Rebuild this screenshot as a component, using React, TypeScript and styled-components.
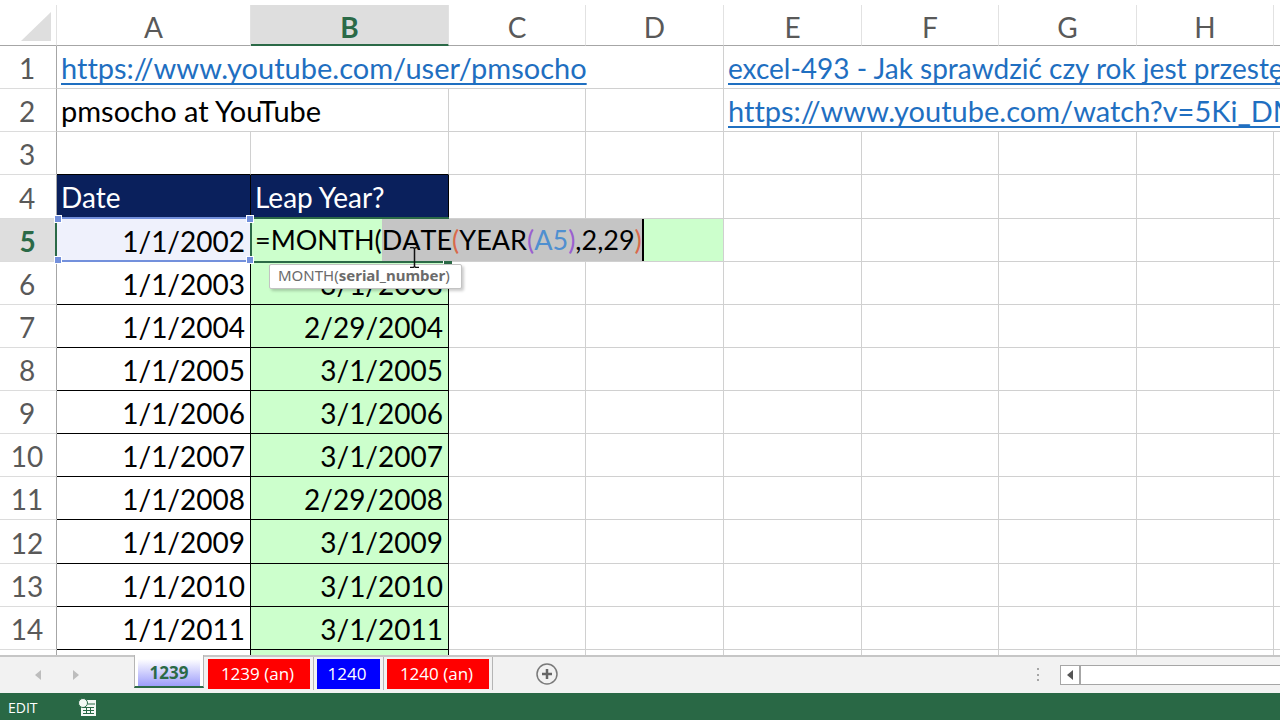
import React from 'react';
import styled, { createGlobalStyle, css } from 'styled-components';

const line = '#d0d0d0';
const strongLine = '#a6a6a6';
const green = '#2b6a47';
const blue = '#7390dc';
const lime = '#ccffcc';

const GlobalStyle = createGlobalStyle`
  * { box-sizing: border-box; }
  body { margin: 0; background: #fff; }
`;

const Workbook = styled.div`
  display: flex;
  flex-direction: column;
  height: 100vh;
  overflow: hidden;
  font-family: Lato, 'Liberation Sans', sans-serif;
`;

const GridArea = styled.main`
  flex: 1;
  min-height: 0;
  padding-top: 5px;
  overflow: hidden;
`;

const Sheet = styled.table`
  width: 100%;
  min-width: 1412px;
  table-layout: fixed;
  border-collapse: separate;
  border-spacing: 0;
  font-size: 28px;
  line-height: 34px;
  font-variant-ligatures: none;
  color: #000;
`;

const Col = styled.col<{ $w?: number }>`
  width: ${(p) => (p.$w ? `${p.$w}px` : 'auto')};
`;

const Row = styled.tr<{ $tall?: boolean }>`
  height: ${(p) => (p.$tall ? 44 : 43)}px;
`;

const Corner = styled.td`
  height: 41px;
  padding: 0 5px 4px 0;
  border-right: 1px solid #e2e2e2;
  border-bottom: 1px solid ${strongLine};
  text-align: right;
  vertical-align: bottom;
  svg { display: block; margin-left: auto; }
`;

const ColumnHead = styled.th<{ $active?: boolean }>`
  height: 41px;
  padding: 4px 0 0;
  border-right: 1px solid #e2e2e2;
  border-bottom: 1px solid ${strongLine};
  color: #595959;
  font-weight: 400;
  ${(p) => p.$active && css`
    padding-top: 5px;
    background: #dedede;
    border-bottom: 2px solid ${green};
    color: ${green};
    font-weight: 700;
  `}
`;

const RowHead = styled.th<{ $active?: boolean }>`
  padding: 2px 2px 0 0;
  border-right: 1px solid ${strongLine};
  border-bottom: 1px solid #dcdcdc;
  color: #595959;
  font-weight: 400;
  ${(p) => p.$active && css`
    padding-right: 0;
    background: #dedede;
    border-right: 2px solid ${green};
    color: ${green};
    font-weight: 700;
  `}
`;

const Cell = styled.td<{ $kind?: 'title' | 'date' | 'result'; $top?: boolean; $large?: boolean }>`
  position: relative;
  padding: 1px 5px 0 4px;
  border-right: 1px solid ${line};
  border-bottom: 1px solid ${line};
  font-size: ${(p) => (p.$large ? 29 : 28)}px;
  white-space: nowrap;
  overflow: hidden;
  ${(p) => p.$top && css`border-bottom-color: #000;`}
  ${(p) => p.$kind && css`
    border-color: #000;
    text-align: right;
  `}
  ${(p) => p.$kind === 'title' && css`
    background: #0a205c;
    color: #fff;
    text-align: left;
  `}
  ${(p) => p.$kind === 'result' && css`background: ${lime};`}
`;

const ReferencedCell = styled(Cell)`
  overflow: visible;
  background: #eff1fc;
  border-color: ${blue};
`;

const EditedCell = styled(Cell)`
  overflow: visible;
  padding: 0 4px;
  background: ${lime};
`;

const ReferenceFrame = styled.div`
  position: absolute;
  z-index: 2;
  inset: -2px -1px -1px 0;
  border: solid ${blue};
  border-width: 2px 0;
`;

const Handle = styled.span<{ $x: 'left' | 'right'; $y: 'top' | 'bottom' }>`
  position: absolute;
  ${(p) => p.$x}: -3px;
  ${(p) => p.$y}: -4px;
  width: 8px;
  height: 8px;
  border: 1px solid #fff;
  background: ${blue};
`;

const ActiveFrame = styled.div`
  position: absolute;
  z-index: 1;
  top: -2px;
  bottom: -2px;
  left: -1px;
  width: 199px;
  border: 2px solid ${green};
  border-right: 0;
  &::after {
    content: '';
    position: absolute;
    right: -3px;
    bottom: -3px;
    width: 8px;
    height: 5px;
    border: solid #fff;
    border-width: 1px 0 0 1px;
    background: ${green};
  }
`;

const Formula = styled.div`
  position: relative;
  z-index: 2;
  display: flex;
  align-items: center;
  height: 42px;
  outline: none;
  font-size: 27px;
  font-kerning: none;
`;

const Selection = styled.span`
  height: 42px;
  line-height: 42px;
  background: #c5c5c5;
  border-right: 2px solid #000;
`;

const Paren = styled.span<{ $tone: string }>`
  color: ${(p) => p.$tone};
`;

const Hint = styled.div`
  position: absolute;
  z-index: 3;
  top: 45px;
  left: 18px;
  height: 25px;
  padding: 0 11px 0 8px;
  border: 1px solid #c3c3c3;
  border-radius: 2px;
  background: #fff;
  box-shadow: 2px 2px 3px rgba(0, 0, 0, 0.2);
  color: #6b6b6b;
  font: 15px/20px 'Noto Sans', sans-serif;
`;

const Pointer = styled.svg`
  position: absolute;
  z-index: 4;
  top: 28px;
  left: 158px;
`;

const SheetLink = styled.a`
  color: #1f6fc1;
  text-decoration: underline;
  text-decoration-thickness: 2px;
  text-underline-offset: 4px;
  text-decoration-skip-ink: none;
`;

const TabBar = styled.nav`
  display: flex;
  flex: none;
  height: 38px;
  border-top: 2px solid #c6c6c6;
  background: #f2f2f2;
`;

const TabScroll = styled.div`
  display: flex;
  align-items: center;
  gap: 26px;
  width: 134px;
  padding-left: 32px;
`;

const PlainButton = styled.button`
  display: flex;
  align-items: center;
  justify-content: center;
  padding: 0;
  border: 0;
  background: none;
`;

const ActiveTab = styled.button`
  width: 70px;
  height: 33px;
  margin: -2px 1px 0 0;
  padding: 4px 3px 0;
  border: solid #b5b5b5;
  border-width: 0 1px;
  border-bottom: 2px solid ${green};
  background: #fff;
  color: ${green};
  font: 700 17px/27px 'Open Sans', sans-serif;
  span {
    display: block;
    height: 27px;
    background: linear-gradient(#fff, #9d9dfb);
  }
`;

const TabSlot = styled.div`
  padding: 2px 3px 0;
  height: 33px;
  border-right: 1px solid #b5b5b5;
`;

const Tab = styled.button<{ $fill: string; $wide?: boolean }>`
  display: block;
  width: ${(p) => (p.$wide ? 102 : 63)}px;
  height: 30px;
  padding: 0 3px 0 0;
  border: 0;
  background: ${(p) => p.$fill};
  color: #fff;
  font: 17px/30px 'Open Sans', sans-serif;
`;

const AddButton = styled(PlainButton)`
  width: 24px;
  height: 34px;
  margin-left: 42px;
`;

const ScrollArea = styled.div`
  display: flex;
  align-items: center;
  width: 246px;
  margin-left: auto;
  gap: 18px;
`;

const Scrollbar = styled.div`
  display: flex;
  flex: 1;
  height: 20px;
  border: 1px solid #a6a6a6;
  border-right: 0;
  background: #fff;
  button { width: 20px; border-right: 2px solid #a6a6a6; }
`;

const StatusBar = styled.footer`
  display: flex;
  flex: none;
  align-items: center;
  gap: 40px;
  height: 27px;
  padding: 2px 8px 0;
  background: #296845;
  color: #fff;
  font: 14px/20px 'Open Sans', sans-serif;
`;

const columns = ['A', 'B', 'C', 'D', 'E', 'F', 'G', 'H', 'I'];
const columnWidths = [57, 194, 198, 137, 138, 138, 137, 138, 137];

const records = [
  { row: 6, date: '1/1/2003', result: '3/1/2003' },
  { row: 7, date: '1/1/2004', result: '2/29/2004' },
  { row: 8, date: '1/1/2005', result: '3/1/2005' },
  { row: 9, date: '1/1/2006', result: '3/1/2006' },
  { row: 10, date: '1/1/2007', result: '3/1/2007' },
  { row: 11, date: '1/1/2008', result: '2/29/2008' },
  { row: 12, date: '1/1/2009', result: '3/1/2009' },
  { row: 13, date: '1/1/2010', result: '3/1/2010' },
  { row: 14, date: '1/1/2011', result: '3/1/2011' },
];

const tabs = [
  { name: '1239 (an)', fill: '#ff0000', wide: true },
  { name: '1240', fill: '#0000ff', wide: false },
  { name: '1240 (an)', fill: '#ff0000', wide: true },
];

const EmptyCells = ({ count }: { count: number }) => (
  <>{Array.from({ length: count }, (_, i) => <Cell key={i} />)}</>
);

const Arrow = ({ flip, color }: { flip?: boolean; color: string }) => (
  <svg width="12" height="12" viewBox="0 0 12 12" aria-hidden="true">
    <path d={flip ? 'M3 1l6 5-6 5z' : 'M9 1L3 6l6 5z'} fill={color} />
  </svg>
);

export default function App() {
  return (
    <Workbook>
      <GlobalStyle />
      <GridArea>
        <Sheet>
          <colgroup>
            {columnWidths.map((w, i) => <Col key={i} $w={w} />)}
            <Col />
          </colgroup>
          <thead>
            <tr>
              <Corner>
                <svg width="30" height="29" viewBox="0 0 30 29" aria-hidden="true">
                  <path d="M30 0v29H0z" fill="#dedede" />
                </svg>
              </Corner>
              {columns.map((c) => (
                <ColumnHead key={c} scope="col" $active={c === 'B'}>{c}</ColumnHead>
              ))}
            </tr>
          </thead>
          <tbody>
            <Row>
              <RowHead scope="row">1</RowHead>
              <Cell colSpan={4} $large>
                <SheetLink href="https://www.youtube.com/user/pmsocho">https://www.youtube.com/user/pmsocho</SheetLink>
              </Cell>
              <Cell colSpan={5}>
                <SheetLink href="#excel-493">excel-493 - Jak sprawdzić czy rok jest przestępny</SheetLink>
              </Cell>
            </Row>
            <Row>
              <RowHead scope="row">2</RowHead>
              <Cell colSpan={2} $large>pmsocho at YouTube</Cell>
              <EmptyCells count={2} />
              <Cell colSpan={5} $large>
                <SheetLink href="#watch">https://www.youtube.com/watch?v=5Ki_DM</SheetLink>
              </Cell>
            </Row>
            <Row>
              <RowHead scope="row">3</RowHead>
              <Cell $top />
              <Cell $top />
              <EmptyCells count={7} />
            </Row>
            <Row $tall>
              <RowHead scope="row">4</RowHead>
              <Cell $kind="title">Date</Cell>
              <Cell $kind="title">Leap Year?</Cell>
              <EmptyCells count={7} />
            </Row>
            <Row>
              <RowHead scope="row" $active>5</RowHead>
              <ReferencedCell $kind="date">
                1/1/2002
                <ReferenceFrame>
                  <Handle $x="left" $y="top" />
                  <Handle $x="right" $y="top" />
                  <Handle $x="left" $y="bottom" />
                  <Handle $x="right" $y="bottom" />
                </ReferenceFrame>
              </ReferencedCell>
              <EditedCell colSpan={3}>
                <ActiveFrame />
                <Formula role="textbox" aria-label="Cell B5" tabIndex={0}>
                  <span>=MONTH(</span>
                  <Selection>
                    DATE<Paren $tone="#d9694a">(</Paren>YEAR<Paren $tone="#9a5fd0">(</Paren>
                    <Paren $tone="#4f8fd0">A5</Paren><Paren $tone="#9a5fd0">)</Paren>,2,29
                    <Paren $tone="#d9694a">)</Paren>
                  </Selection>
                </Formula>
                <Hint role="tooltip">MONTH(<b>serial_number</b>)</Hint>
                <Pointer width="11" height="21" viewBox="0 0 11 21" aria-hidden="true">
                  <path d="M1 .5h3l1.500 1L7 .5h3M5.500 1v19M1 20.500h3l1.500-1 1.500 1h3" fill="none" stroke="#111" strokeWidth="1.500" />
                </Pointer>
              </EditedCell>
              <EmptyCells count={5} />
            </Row>
            {records.map((r) => (
              <Row key={r.row} $tall={r.row === 12}>
                <RowHead scope="row">{r.row}</RowHead>
                <Cell $kind="date">{r.date}</Cell>
                <Cell $kind="result">{r.result}</Cell>
                <EmptyCells count={7} />
              </Row>
            ))}
            <Row>
              <RowHead scope="row" />
              <Cell $kind="date" />
              <Cell $kind="result" />
              <EmptyCells count={7} />
            </Row>
          </tbody>
        </Sheet>
      </GridArea>
      <TabBar aria-label="Sheets">
        <TabScroll>
          <PlainButton aria-label="Previous sheet"><Arrow color="#bdbdbd" /></PlainButton>
          <PlainButton aria-label="Next sheet"><Arrow flip color="#bdbdbd" /></PlainButton>
        </TabScroll>
        <ActiveTab aria-current="page"><span>1239</span></ActiveTab>
        {tabs.map((t) => (
          <TabSlot key={t.name}>
            <Tab $fill={t.fill} $wide={t.wide}>{t.name}</Tab>
          </TabSlot>
        ))}
        <AddButton aria-label="New sheet">
          <svg width="24" height="24" viewBox="0 0 24 24" fill="none" aria-hidden="true">
            <circle cx="12" cy="12" r="10" stroke="#7a7a7a" strokeWidth="1.500" />
            <path d="M12 7v10M7 12h10" stroke="#666" strokeWidth="2.500" />
          </svg>
        </AddButton>
        <ScrollArea>
          <svg width="8" height="16" viewBox="0 0 8 16" fill="#a6a6a6" aria-hidden="true">
            <path d="M3 1h2v2H3zM3 7h2v2H3zM3 12h2v2H3z" />
          </svg>
          <Scrollbar>
            <PlainButton aria-label="Scroll left"><Arrow color="#555" /></PlainButton>
          </Scrollbar>
        </ScrollArea>
      </TabBar>
      <StatusBar>
        <span>EDIT</span>
        <svg width="20" height="20" viewBox="0 0 20 20" aria-hidden="true">
          <path d="M9 2h9v16H3v-8h2" fill="#f3f8f4" />
          <path d="M3 8h15v10H3z" fill="#f3f8f4" />
          <circle cx="5" cy="5" r="4.500" fill="#f3f8f4" stroke="#296845" strokeWidth="1" />
          <path d="M10 6h7M5 9.500h11M5 12.500h11M5 15.500h11M8.500 9v7M12.500 9v7" stroke="#296845" strokeWidth="1" />
        </svg>
      </StatusBar>
    </Workbook>
  );
}
